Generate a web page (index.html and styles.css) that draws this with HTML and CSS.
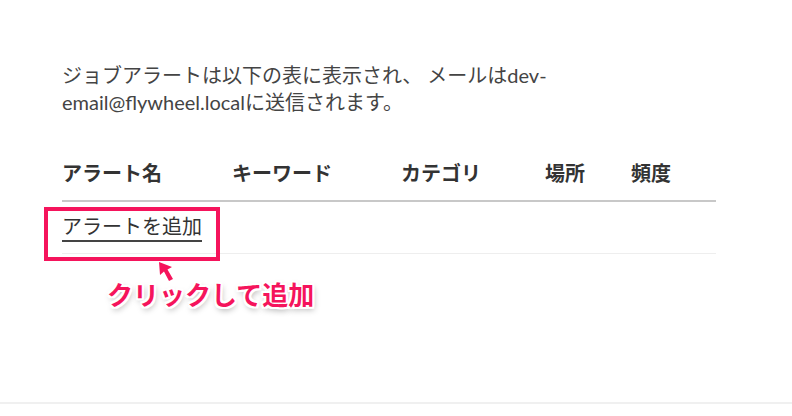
FILE: index.html
```html
<!DOCTYPE html>
<html lang="ja">
  <head>
    <meta charset="UTF-8" />
    <meta name="viewport" content="width=device-width, initial-scale=1.0" />
    <title>ジョブアラート</title>
    <link rel="stylesheet" href="styles.css">
  </head>
  <body>
    <div class="page">
      <div class="content">
        <p class="intro">ジョブアラートは以下の表に表示され、 メールはdev-email@flywheel.localに送信されます。</p>

        <table class="alerts">
          <thead>
            <tr>
              <th class="col-name">アラート名</th>
              <th class="col-keyword">キーワード</th>
              <th class="col-category">カテゴリ</th>
              <th class="col-place">場所</th>
              <th class="col-freq">頻度</th>
            </tr>
          </thead>
          <tbody>
            <tr>
              <td colspan="5" class="add-cell">
                <a href="#" class="add-link">アラートを追加</a>
                <span class="highlight"></span>
                <svg class="arrow" width="30" height="30" viewBox="0 0 30 30">
                  <path d="M2 1 L15 6 L10.5 8.5 L16 18 L12 20 L7 10.5 L3 14 Z" fill="#f5145c" />
                </svg>
                <span class="note">クリックして追加</span>
              </td>
            </tr>
          </tbody>
        </table>
      </div>
      <div class="footer-line"></div>
    </div>
  </body>
</html>
```

FILE: styles.css
```css
* {
  margin: 0;
  padding: 0;
  box-sizing: border-box;
}

body {
  font-family: Lato, "Noto Sans CJK JP", sans-serif;
  background: #fff;
  color: #333;
}

.page {
  width: 792px;
  height: 416px;
  display: flex;
  flex-direction: column;
}

.content {
  flex: 1;
  padding: 62px 0 0 62px;
  width: 716px;
}

.intro {
  font-size: 20px;
  line-height: 27px;
  color: #444;
  width: 520px;
}

.alerts {
  width: 654px;
  margin-top: 42px;
  border-collapse: collapse;
  font-size: 20px;
}

.alerts th {
  text-align: left;
  font-weight: bold;
  color: #333;
  padding: 0 0 13px;
  border-bottom: 2px solid #c8c8c8;
}

.col-name { width: 170px; }
.col-keyword { width: 169px; }
.col-category { width: 144px; }
.col-place { width: 86px; }

.add-cell {
  position: relative;
  height: 52px;
  border-bottom: 1px solid #eee;
  vertical-align: top;
  padding-top: 9px;
}

.add-link {
  color: #333;
  text-decoration: none;
  border-bottom: 2px solid #444;
  padding-bottom: 2px;
}

.highlight {
  position: absolute;
  left: -18px;
  top: 5px;
  width: 176px;
  height: 54px;
  border: 4px solid #f5145c;
}

.arrow {
  position: absolute;
  left: 95px;
  top: 59px;
}

.note {
  position: absolute;
  left: 45px;
  top: 73px;
  white-space: nowrap;
  font-size: 26px;
  font-weight: bold;
  color: #f5145c;
  text-shadow:
    -2px -2px 0 #fff, 2px -2px 0 #fff, -2px 2px 0 #fff, 2px 2px 0 #fff,
    0 -2px 0 #fff, 0 2px 0 #fff, -2px 0 0 #fff, 2px 0 0 #fff,
    1px 3px 6px rgba(0, 0, 0, 0.4);
}

.footer-line {
  height: 14px;
  border-top: 2px solid #f0f0f0;
}
```
